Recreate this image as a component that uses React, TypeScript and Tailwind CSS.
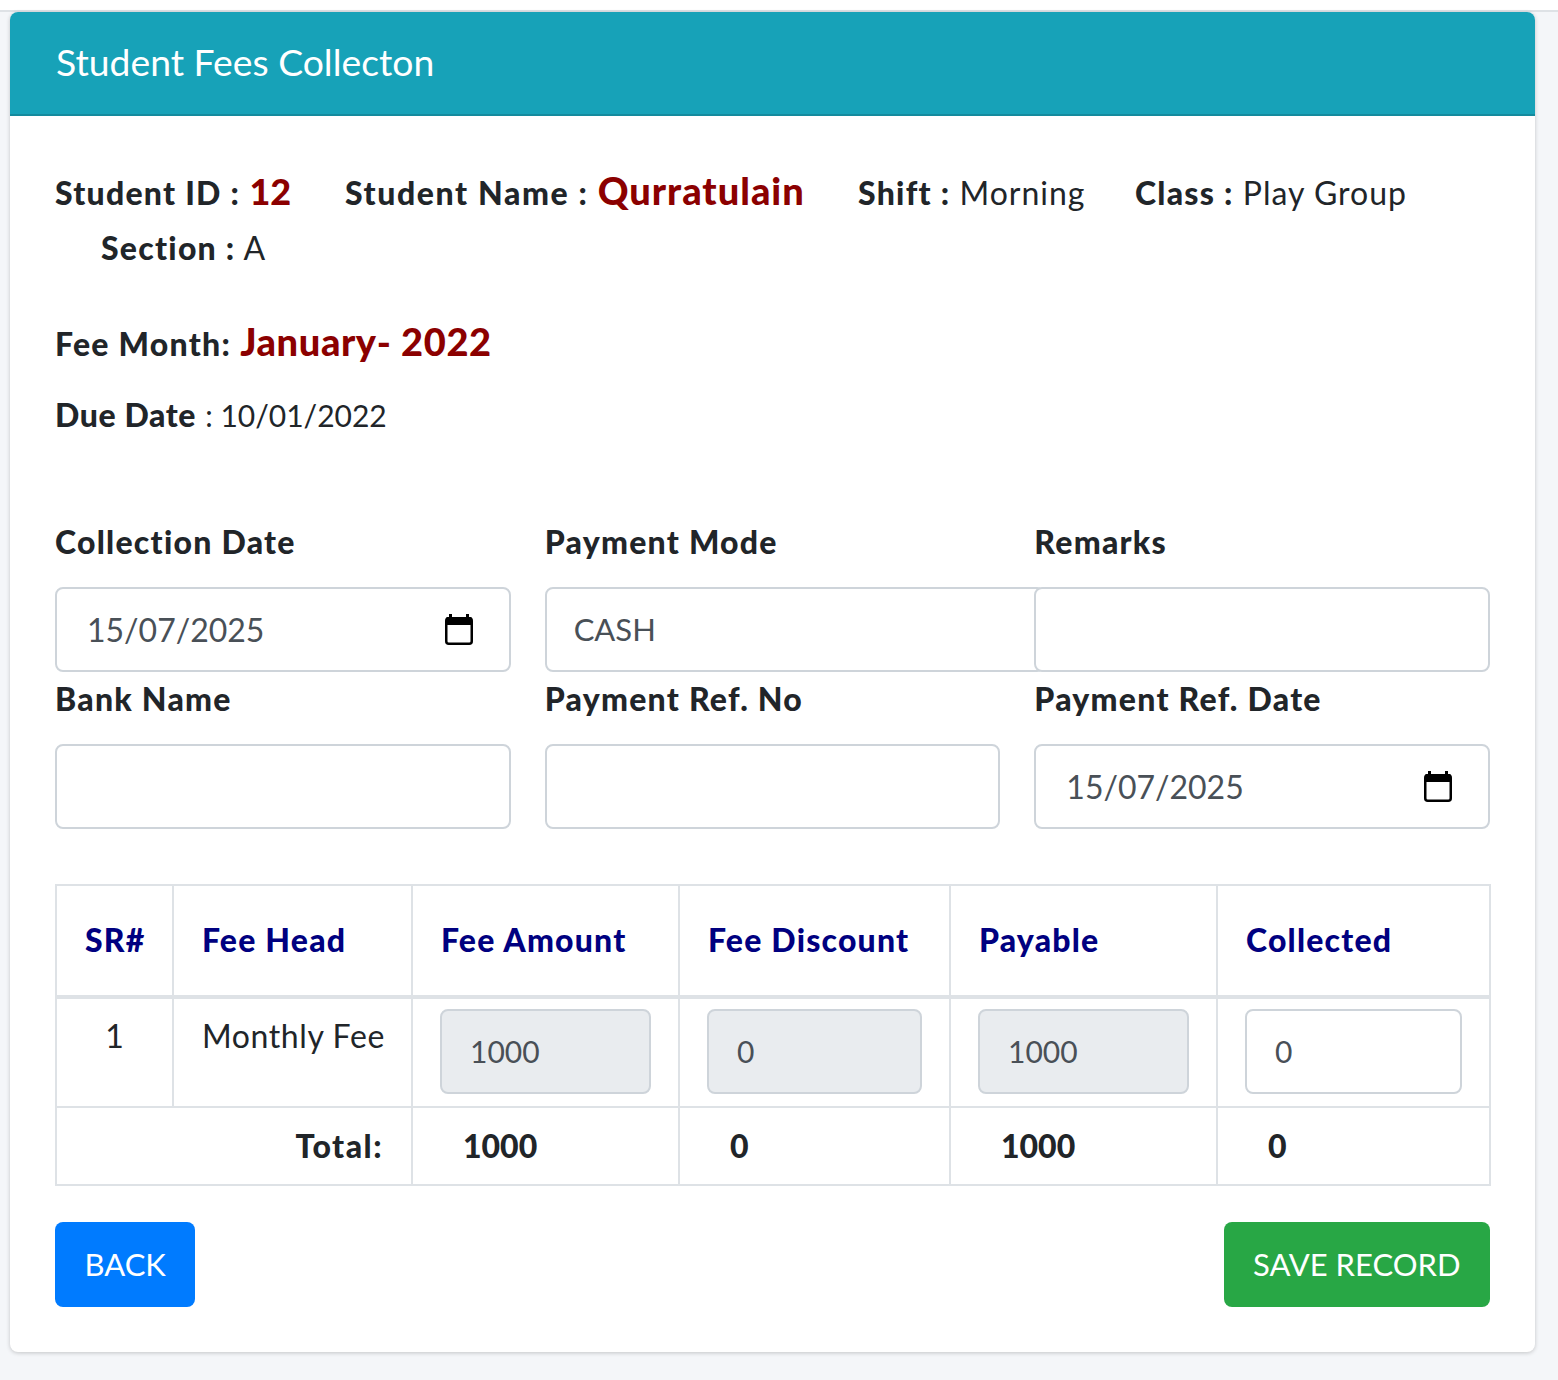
import type { ReactNode } from 'react'

function CalendarIcon() {
	return (
		<svg width="28" height="31" viewBox="0 0 28 31" className="mb-[1px] shrink-0" aria-hidden="true">
			<rect x="1.25" y="4.25" width="25.5" height="25.5" rx="2.5" fill="none" stroke="#000" strokeWidth="2.5" />
			<rect x="1" y="3" width="26" height="8" rx="1.5" fill="#000" />
			<rect x="4" y="0" width="3" height="4" fill="#000" />
			<rect x="21" y="0" width="3" height="4" fill="#000" />
		</svg>
	)
}

const inputClass =
	'flex h-[85px] items-center rounded-lg border-2 border-[#ced4da] text-[#495057]'

const boldLabel = 'font-black tracking-[1.25px]'

function Field({ label, children }: { label: string; children?: ReactNode }) {
	return (
		<div>
			<div className={`mb-[24px] h-[40px] text-[32px] leading-[38px] text-[#212529] ${boldLabel}`}>
				{label}
			</div>
			{children ?? <div className={`${inputClass} bg-white`} />}
		</div>
	)
}

function DateInput({ value }: { value: string }) {
	return (
		<div className={`${inputClass} justify-between bg-white pr-[36px] pl-[30px] text-[32px]`}>
			<span>{value}</span>
			<CalendarIcon />
		</div>
	)
}

const heads = ['SR#', 'Fee Head', 'Fee Amount', 'Fee Discount', 'Payable', 'Collected']

function Amount({ value, disabled }: { value: string; disabled?: boolean }) {
	return (
		<div className={`${inputClass} w-full pl-[28px] ${disabled ? 'bg-[#e9ecef]' : 'bg-white'}`}>
			{value}
		</div>
	)
}

export default function App() {
	return (
		<div className="min-h-[1380px] bg-[#f4f6f9] font-['Lato',sans-serif] text-[30px] text-[#212529]">
			<div className="h-[12px] border-b-2 border-[#dee2e6] bg-white" />
			<div className="ml-[10px] h-[1340px] w-[1525px] overflow-hidden rounded-lg bg-white shadow-[0_1px_4px_rgba(0,0,0,0.2)]">
				<div className="flex h-[104px] items-center border-b-2 border-[#148a9d] bg-[#17a2b8] pb-[2px] pl-[46px] text-[37.3px] text-white">
					Student Fees Collecton
				</div>
				<div className="px-[45px] pt-[46px] text-[32px] tracking-[1px]">
					<div className="flex h-[58px] items-baseline">
						<span className="w-[290px]">
							<b className={boldLabel}>Student ID :</b>{' '}
							<b className="text-[36px] font-black tracking-normal text-[#8b0000]">12</b>
						</span>
						<span className="w-[513px]">
							<b className="font-black tracking-[1.6px]">Student Name :</b>{' '}
							<b className="text-[38px] font-black tracking-[1px] text-[#8b0000]">Qurratulain</b>
						</span>
						<span className="w-[277px]">
							<b className={boldLabel}>Shift :</b> Morning
						</span>
						<span>
							<b className={boldLabel}>Class :</b> Play Group
						</span>
					</div>
					<div className="flex h-[56px] items-center pl-[46px]">
						<span>
							<b className={boldLabel}>Section :</b> A
						</span>
					</div>
					<div className="mt-[35px] flex h-[60px] items-center">
						<span>
							<b className={boldLabel}>Fee Month:</b>{' '}
							<b className="text-[38px] font-black tracking-[0.6px] text-[#8b0000]">January- 2022</b>
						</span>
					</div>
					<div className="mt-[24px] flex h-[40px] items-center">
						<span>
							<b className="font-black tracking-[0.6px]">Due Date</b>{' '}
							<span className="text-[30px] tracking-normal">: 10/01/2022</span>
						</span>
					</div>

					<div className="mt-[88px] grid grid-cols-3 gap-x-[34px] gap-y-[8px] tracking-normal">
						<Field label="Collection Date">
							<DateInput value="15/07/2025" />
						</Field>
						<Field label="Payment Mode">
							<div className={`${inputClass} w-[500px] bg-white pl-[27px] text-[31px]`}>CASH</div>
						</Field>
						<div className="relative z-10">
							<Field label="Remarks" />
						</div>
						<Field label="Bank Name" />
						<Field label="Payment Ref. No" />
						<Field label="Payment Ref. Date">
							<DateInput value="15/07/2025" />
						</Field>
					</div>

					<table className="mt-[55px] w-[1434px] table-fixed border-collapse tracking-normal">
						<colgroup>
							<col className="w-[117px]" />
							<col className="w-[239px]" />
							<col className="w-[267px]" />
							<col className="w-[271px]" />
							<col className="w-[267px]" />
							<col className="w-[273px]" />
						</colgroup>
						<thead>
							<tr className="h-[112px]">
								{heads.map((head) => (
									<th
										key={head}
										className="border-2 border-b-4 border-[#dee2e6] pb-[2px] pl-[28px] text-left font-black tracking-[1.2px] text-[#000080]"
									>
										{head}
									</th>
								))}
							</tr>
						</thead>
						<tbody>
							<tr className="h-[110px]">
								<td className="border-2 border-[#dee2e6] pt-[9px] text-center align-top leading-[56px]">1</td>
								<td className="border-2 border-[#dee2e6] pt-[9px] pl-[28px] align-top leading-[56px] tracking-[0.6px]">Monthly Fee</td>
								<td className="border-2 border-[#dee2e6] px-[27px] pb-[2px] text-[30px]">
									<Amount value="1000" disabled />
								</td>
								<td className="border-2 border-[#dee2e6] px-[27px] pb-[2px] text-[30px]">
									<Amount value="0" disabled />
								</td>
								<td className="border-2 border-[#dee2e6] px-[27px] pb-[2px] text-[30px]">
									<Amount value="1000" disabled />
								</td>
								<td className="border-2 border-[#dee2e6] px-[27px] pb-[2px] text-[30px]">
									<Amount value="0" />
								</td>
							</tr>
							<tr className="h-[78px] font-black">
								<td colSpan={2} className="border-2 border-[#dee2e6] pr-[28px] text-right tracking-[1.5px]">Total:</td>
								<td className="border-2 border-[#dee2e6] pl-[50px]">1000</td>
								<td className="border-2 border-[#dee2e6] pl-[50px]">0</td>
								<td className="border-2 border-[#dee2e6] pl-[50px]">1000</td>
								<td className="border-2 border-[#dee2e6] pl-[50px]">0</td>
							</tr>
						</tbody>
					</table>

					<div className="mt-[36px] flex justify-between text-[31px] tracking-normal">
						<button className="h-[85px] rounded-lg bg-[#007bff] px-[29.5px] text-white">BACK</button>
						<button className="h-[85px] rounded-lg bg-[#28a745] px-[29.5px] text-white">SAVE RECORD</button>
					</div>
				</div>
			</div>
		</div>
	)
}
